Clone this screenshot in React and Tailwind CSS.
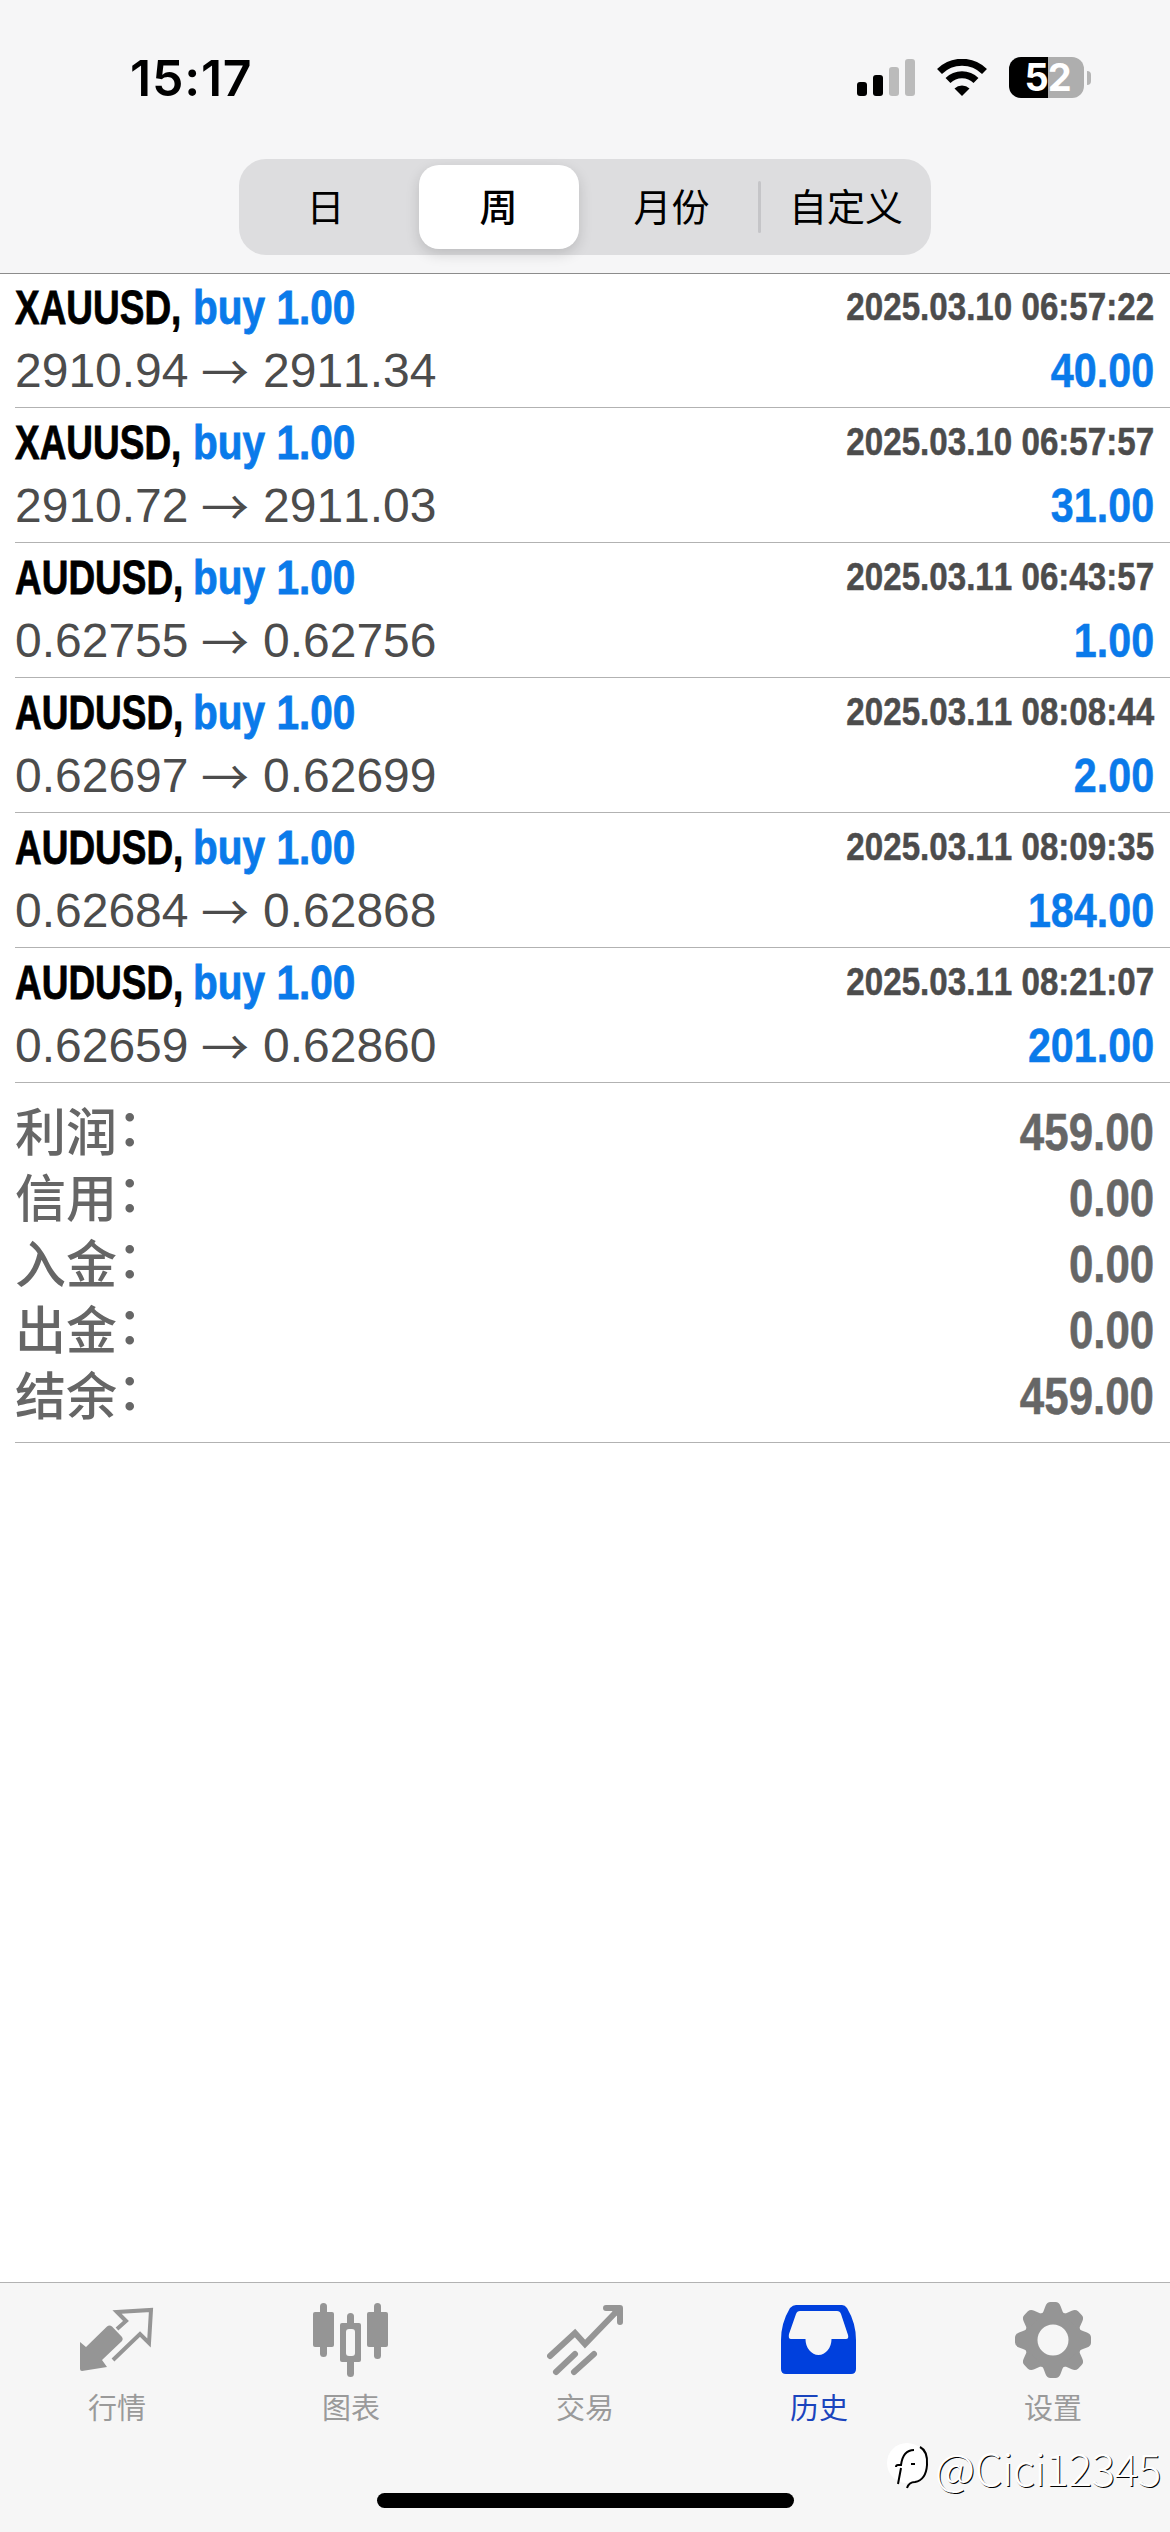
const deals = [
  { symbol: 'XAUUSD', open: '2910.94', close: '2911.34', time: '2025.03.10 06:57:22', profit: '40.00' },
  { symbol: 'XAUUSD', open: '2910.72', close: '2911.03', time: '2025.03.10 06:57:57', profit: '31.00' },
  { symbol: 'AUDUSD', open: '0.62755', close: '0.62756', time: '2025.03.11 06:43:57', profit: '1.00' },
  { symbol: 'AUDUSD', open: '0.62697', close: '0.62699', time: '2025.03.11 08:08:44', profit: '2.00' },
  { symbol: 'AUDUSD', open: '0.62684', close: '0.62868', time: '2025.03.11 08:09:35', profit: '184.00' },
  { symbol: 'AUDUSD', open: '0.62659', close: '0.62860', time: '2025.03.11 08:21:07', profit: '201.00' },
];

const totals = [
  { label: '利润', value: '459.00' },
  { label: '信用', value: '0.00' },
  { label: '入金', value: '0.00' },
  { label: '出金', value: '0.00' },
  { label: '结余', value: '459.00' },
];

const periods = ['日', '周', '月份', '自定义'];

/* Status bar icons */
const SignalIcon = () => (
  <svg className="h-[38px] w-[58px]" viewBox="0 0 58 38">
    <rect x="0" y="23" width="10" height="14" rx="3" />
    <rect x="16" y="16" width="10" height="21" rx="3" />
    <rect x="32" y="8" width="10" height="29" rx="3" fill="#bbbbbb" />
    <rect x="48" y="0" width="10" height="37" rx="3" fill="#bbbbbb" />
  </svg>
);

const WifiIcon = () => (
  <svg className="h-[38px] w-[50px]" viewBox="0 0 50 38" fill="none" stroke="#000" strokeWidth="7">
    <path d="M2.500 12.500a32 32 0 0 1 45 0" />
    <path d="M11 21.500a20 20 0 0 1 28 0" />
    <path d="M25 37l-7.500-7.500a11 11 0 0 1 15 0z" fill="#000" stroke="none" />
  </svg>
);

const Battery = () => (
  <div className="flex items-center gap-[3px]">
    <div className="flex h-[41px] w-[75px] items-center justify-center rounded-[12px] bg-[linear-gradient(90deg,#000_39px,#aeaeae_39px)] pl-[2px] font-['Inter'] text-[38px] font-bold tracking-[-1px] text-white">
      52
    </div>
    <div className="h-[14px] w-[4px] rounded-r-full bg-[#b5b5b5]" />
  </div>
);

/* Tab bar icons */
const QuotesIcon = () => (
  <svg className="h-[76px] w-[76px]" viewBox="0 0 76 76">
    <path
      d="M1 40l6 5L28 24.500q2.500-2 5 0L43 35q1.500 2 0 4L23 58l5 7-25 4q-2 0-2-2z"
      fill="#959595"
    />
    <path
      d="M38 27l9-8-9-9 34-2-2 33-9-9-27 26"
      fill="none"
      stroke="#959595"
      strokeWidth="4"
    />
  </svg>
);

const ChartIcon = () => (
  <svg className="h-[76px] w-[76px]" viewBox="0 0 76 76" fill="#959595">
    <rect x="7" y="1" width="7" height="54" rx="3.5" />
    <rect x="0" y="10" width="21" height="35" rx="2" />
    <rect x="34" y="11" width="7" height="64" rx="3.5" />
    <rect x="27" y="21" width="21" height="39" rx="2" />
    <rect x="33" y="27" width="9" height="27" rx="3" fill="#f6f6f6" />
    <rect x="61" y="1" width="7" height="56" rx="3.5" />
    <rect x="54" y="10" width="21" height="35" rx="2" />
  </svg>
);

const TradeIcon = () => (
  <svg
    className="h-[76px] w-[76px]"
    viewBox="0 0 76 76"
    fill="none"
    stroke="#959595"
    strokeWidth="6"
    strokeLinecap="round"
  >
    <path d="M3 54l25-23 10 11L70 9" strokeLinejoin="miter" />
    <path d="M59 6h14v14" strokeLinejoin="round" />
    <path d="M62 6l11 11V6z" fill="#959595" stroke="none" />
    <path d="M9 70l19-18M27 70l20-18" />
  </svg>
);

const HistoryIcon = () => (
  <svg className="h-[76px] w-[76px]" viewBox="0 0 76 76">
    <path
      fillRule="evenodd"
      fill="#0040dd"
      d="M15 3h46q3 0 5 3 9 15 9 32v29q0 5-5 5H5q-5 0-5-5V38Q0 21 9 6q3-3 6-3zM19 9q-3 0-4 3L8 32q-1 5 2 5h14.500a13 16 0 0 0 26 0H65q3 0 2-4l-7-21q-1-3-4-3z"
    />
  </svg>
);

const SettingsIcon = () => (
  <svg className="h-[76px] w-[76px]" viewBox="-38 -38 76 76">
    <g fill="#959595">
      <circle r="29" />
      {[0, 45, 90, 135, 180, 225, 270, 315].map((angle) => (
        <path
          key={angle}
          transform={`rotate(${angle})`}
          d="M-14 -25q4-1 5-5l1.500-4q1.500-4 5-4h5q3.500 0 5 4l1.500 4q1 4 5 5z"
        />
      ))}
    </g>
    <circle r="15.5" fill="#f6f6f6" />
  </svg>
);

const tabs = [
  { label: '行情', Icon: QuotesIcon },
  { label: '图表', Icon: ChartIcon },
  { label: '交易', Icon: TradeIcon },
  { label: '历史', Icon: HistoryIcon, active: true },
  { label: '设置', Icon: SettingsIcon },
];

const DealRow = ({ symbol, open, close, time, profit }) => (
  <div className="ml-[15px] flex h-[135px] justify-between border-b border-[#b2b2b2] pr-4 whitespace-nowrap">
    <div>
      <div className="flex pt-[8px] text-[48px] leading-[54px] font-bold [-webkit-text-stroke-width:0.8px]">
        <span className="w-[178px] origin-left scale-x-[0.77] text-black">{symbol},</span>
        <span className="origin-left scale-x-[0.845] text-[#0a7aea]">buy 1.00</span>
      </div>
      <div className="flex pt-[9px] text-[48px] leading-[54px] text-[#4c4c4c]">
        <span className="w-[186px]">{open}</span>
        <span className="w-[62px] font-['Noto_Sans_CJK_SC'] leading-[50px]">→</span>
        <span>{close}</span>
      </div>
    </div>
    <div className="text-right font-bold [-webkit-text-stroke-width:0.5px]">
      <div className="origin-right scale-x-[0.85] pt-[8px] text-[39px] leading-[52px] text-[#4c4c4c]">{time}</div>
      <div className="origin-right scale-x-[0.86] pt-[11px] text-[48px] leading-[54px] text-[#0a7aea]">{profit}</div>
    </div>
  </div>
);

const App = () => (
  <div className="flex h-[2532px] w-[1170px] flex-col overflow-hidden bg-white font-['Liberation_Sans'] [font-kerning:none]">
    {/* Header */}
    <header className="h-[274px] border-b border-[#8c8c8c] bg-[#f6f6f7]">
      <div className="flex h-[159px] items-start justify-between pr-[79px] pl-[130px]">
        <span className="pt-[48px] font-['Inter'] text-[50px] leading-[60px] font-semibold tracking-[0.8px]">15:17</span>
        <div className="flex items-center gap-[22px] pt-[57px]">
          <SignalIcon />
          <WifiIcon />
          <Battery />
        </div>
      </div>

      <div className="mx-auto grid h-[96px] w-[692px] grid-cols-4 rounded-[27px] bg-[#dddddf] font-['Noto_Sans_CJK_SC'] text-[38px] leading-[56px]">
        {periods.map((period, i) => (
          <button key={period} className="flex items-center justify-center py-[6px]">
            {i === 3 && <span className="h-[52px] w-[3px] rounded-full bg-[#c5c5c8]" />}
            <span
              className={
                i === 1
                  ? 'flex h-full w-[160px] items-center justify-center rounded-[20px] bg-white pb-[5px] font-medium shadow-[0_5px_14px_rgba(0,0,0,0.15)]'
                  : 'flex-1 pb-[5px]'
              }
            >
              {period}
            </span>
          </button>
        ))}
      </div>
    </header>

    {/* Deals */}
    <main className="-mt-px flex-1">
      {deals.map((deal) => (
        <DealRow key={deal.time} {...deal} />
      ))}

      <div className="ml-[15px] h-[360px] border-b border-[#b2b2b2] pt-[17px] pr-4 text-[#666666]">
        {totals.map(({ label, value }) => (
          <div key={label} className="flex h-[66px] justify-between">
            <div className="flex font-['Noto_Sans_CJK_SC'] text-[51px] leading-[58px] font-medium">
              <span>{label}</span>
              <span className="leading-[49px]">：</span>
            </div>
            <span className="origin-right scale-x-[0.86] text-[51px] leading-[66px] font-bold [-webkit-text-stroke-width:0.5px]">{value}</span>
          </div>
        ))}
      </div>
    </main>

    {/* Tab bar */}
    <nav className="relative h-[250px] border-t border-[#b2b2b2] bg-[#f6f6f6]">
      <div className="grid grid-cols-5 pt-[19px]">
        {tabs.map(({ label, Icon, active }) => (
          <button
            key={label}
            className={
              active
                ? "flex flex-col items-center font-['Noto_Sans_CJK_SC'] text-[29px] text-[#1a44bd]"
                : "flex flex-col items-center font-['Noto_Sans_CJK_SC'] text-[29px] text-[#9a9a9a]"
            }
          >
            <Icon />
            <span className="pt-[8px] leading-[40px]">{label}</span>
          </button>
        ))}
      </div>
      <div className="mx-auto mt-[67px] h-[15px] w-[417px] rounded-full bg-black" />

      {/* Watermark */}
      <div className="absolute right-[9px] bottom-[35px] flex items-center font-['Noto_Sans_CJK_SC'] text-[44px] leading-[60px] font-light tracking-[-0.4px] text-white [text-shadow:1px_1px_0_#000]">
        <svg className="h-[48px] w-[48px]" viewBox="0 0 48 48" fill="none">
          <circle cx="20" cy="20" r="20" fill="#fff" />
          <path
            d="M11 41l3-16M9 24q0-2 2-2h3q2-15 13-15M33 4q8 4 7 18-1 15-12 17-6 0-8 6M24 21h4"
            stroke="#000"
            strokeWidth="2"
          />
        </svg>
        <span>@Cici12345</span>
      </div>
    </nav>
  </div>
);

export default App;
